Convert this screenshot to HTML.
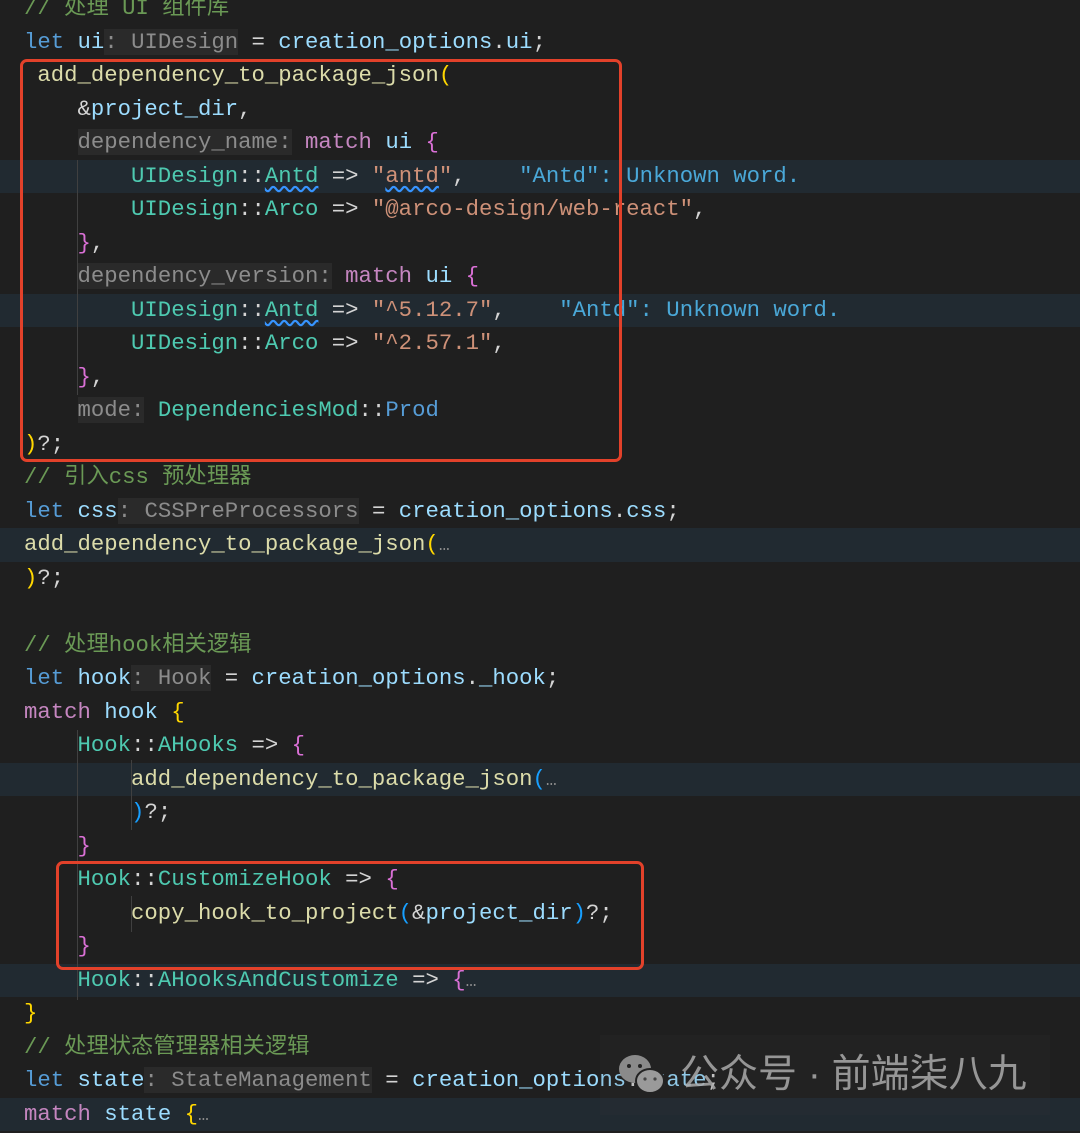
<!DOCTYPE html>
<html><head><meta charset="utf-8"><style>
html,body{margin:0;padding:0;background:#1f1f1f;width:1080px;height:1131px;overflow:hidden}
#ed{position:absolute;left:0;top:-8px;width:1080px;font-family:"Liberation Mono","Noto Sans CJK SC",monospace;font-size:22.3px;color:#d4d4d4}
.l{height:33.5px;line-height:33.5px;white-space:pre;padding-left:24px;position:relative}
.h{background:#212a31}
.c{color:#6a9955}.k{color:#569cd6}.v{color:#9cdcfe}.t{color:#4ec9b0}.f{color:#dcdcaa}.s{color:#ce9178}.m{color:#c586c0}
.i{color:#8c8c8c;background:#2a2a2a}.g{color:#ffd700}.p{color:#da70d6}.b{color:#179fff}.d{color:#4aa8d8}
.e{color:#8c8c8c;font-size:18px}
.w{text-decoration:underline wavy #3794ff;text-underline-offset:4px}
.box{position:absolute;border:3px solid #e2412a;border-radius:7px}
.ig{position:absolute;width:1px;background:#404040}
</style></head><body>
<div id="ed">
<div class="l"><span class="c">// 处理 UI 组件库</span></div>
<div class="l"><span class="k">let</span> <span class="v">ui</span><span class="i">: UIDesign</span> = <span class="v">creation_options</span>.<span class="v">ui</span>;</div>
<div class="l"> <span class="f">add_dependency_to_package_json</span><span class="g">(</span></div>
<div class="l">    &amp;<span class="v">project_dir</span>,</div>
<div class="l">    <span class="i">dependency_name:</span> <span class="m">match</span> <span class="v">ui</span> <span class="p">{</span></div>
<div class="l h">        <span class="t">UIDesign</span>::<span class="t w">Antd</span> =&gt; <span class="s">"<span class="w">antd</span>"</span>,    <span class="d">"Antd": Unknown word.</span></div>
<div class="l">        <span class="t">UIDesign</span>::<span class="t">Arco</span> =&gt; <span class="s">"@arco-design/web-react"</span>,</div>
<div class="l">    <span class="p">}</span>,</div>
<div class="l">    <span class="i">dependency_version:</span> <span class="m">match</span> <span class="v">ui</span> <span class="p">{</span></div>
<div class="l h">        <span class="t">UIDesign</span>::<span class="t w">Antd</span> =&gt; <span class="s">"^5.12.7"</span>,    <span class="d">"Antd": Unknown word.</span></div>
<div class="l">        <span class="t">UIDesign</span>::<span class="t">Arco</span> =&gt; <span class="s">"^2.57.1"</span>,</div>
<div class="l">    <span class="p">}</span>,</div>
<div class="l">    <span class="i">mode:</span> <span class="t">DependenciesMod</span>::<span class="k">Prod</span></div>
<div class="l"><span class="g">)</span>?;</div>
<div class="l"><span class="c">// 引入css 预处理器</span></div>
<div class="l"><span class="k">let</span> <span class="v">css</span><span class="i">: CSSPreProcessors</span> = <span class="v">creation_options</span>.<span class="v">css</span>;</div>
<div class="l h"><span class="f">add_dependency_to_package_json</span><span class="g">(</span><span class="e">…</span></div>
<div class="l"><span class="g">)</span>?;</div>
<div class="l"> </div>
<div class="l"><span class="c">// 处理hook相关逻辑</span></div>
<div class="l"><span class="k">let</span> <span class="v">hook</span><span class="i">: Hook</span> = <span class="v">creation_options</span>.<span class="v">_hook</span>;</div>
<div class="l"><span class="m">match</span> <span class="v">hook</span> <span class="g">{</span></div>
<div class="l">    <span class="t">Hook</span>::<span class="t">AHooks</span> =&gt; <span class="p">{</span></div>
<div class="l h">        <span class="f">add_dependency_to_package_json</span><span class="b">(</span><span class="e">…</span></div>
<div class="l">        <span class="b">)</span>?;</div>
<div class="l">    <span class="p">}</span></div>
<div class="l">    <span class="t">Hook</span>::<span class="t">CustomizeHook</span> =&gt; <span class="p">{</span></div>
<div class="l">        <span class="f">copy_hook_to_project</span><span class="b">(</span>&amp;<span class="v">project_dir</span><span class="b">)</span>?;</div>
<div class="l">    <span class="p">}</span></div>
<div class="l h">    <span class="t">Hook</span>::<span class="t">AHooksAndCustomize</span> =&gt; <span class="p">{</span><span class="e">…</span></div>
<div class="l"><span class="g">}</span></div>
<div class="l"><span class="c">// 处理状态管理器相关逻辑</span></div>
<div class="l"><span class="k">let</span> <span class="v">state</span><span class="i">: StateManagement</span> = <span class="v">creation_options</span>.<span class="v">state</span>;</div>
<div class="l h"><span class="m">match</span> <span class="v">state</span> <span class="g">{</span><span class="e">…</span></div>
</div>
<div class="ig" style="left:77px;top:160px;height:235px"></div>
<div class="ig" style="left:77px;top:730px;height:270px"></div>
<div class="ig" style="left:131px;top:760px;height:70px"></div>
<div class="ig" style="left:131px;top:896px;height:36px"></div>
<div class="box" style="left:20px;top:59px;width:596px;height:397px"></div>
<div class="box" style="left:56px;top:861px;width:582px;height:103px"></div>
<div style="position:absolute;left:600px;top:1035px;width:450px;height:80px;background:rgba(60,60,60,0.12)"></div>
<svg style="position:absolute;left:617px;top:1052px" width="52" height="46" viewBox="0 0 52 46"><ellipse cx="18" cy="17" rx="16" ry="14" fill="#8a8a8a"/><ellipse cx="33" cy="29" rx="14" ry="12" fill="#9a9a9a" stroke="#222" stroke-width="2"/><circle cx="12" cy="14" r="2" fill="#222"/><circle cx="23" cy="14" r="2" fill="#222"/><circle cx="28" cy="27" r="1.6" fill="#444"/><circle cx="38" cy="27" r="1.6" fill="#444"/></svg>
<div style="position:absolute;left:680px;top:1050px;font-family:'Liberation Sans','Noto Sans CJK SC',sans-serif;font-size:39px;line-height:50px;color:rgba(170,170,170,0.85);white-space:pre">公众号 · 前端柒八九</div>
</body></html>
